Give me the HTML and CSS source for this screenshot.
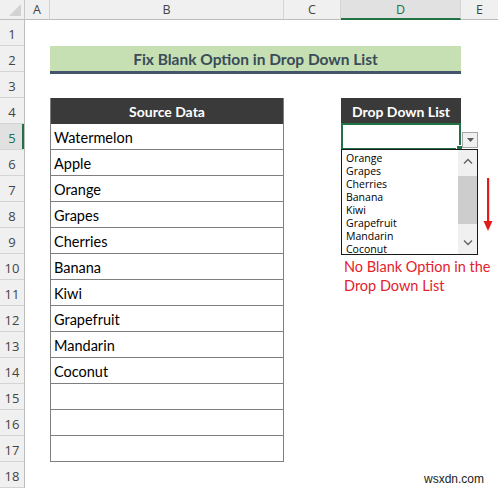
FILE: index.html
```html
<!DOCTYPE html>
<html lang="en">
<head>
<meta charset="utf-8">
<title>Fix Blank Option in Drop Down List</title>
<link rel="stylesheet" href="styles.css">
</head>
<body>
<div class="sheet">
  <div class="corner"><span class="corner-tri"></span></div>
  <div class="colhead ch-a">A</div>
  <div class="colhead ch-b">B</div>
  <div class="colhead ch-c">C</div>
  <div class="colhead ch-d selected">D</div>
  <div class="colhead ch-e">E</div>

  <div class="rowheads">
    <div class="rh">1</div><div class="rh">2</div><div class="rh">3</div>
    <div class="rh">4</div><div class="rh selected">5</div><div class="rh">6</div>
    <div class="rh">7</div><div class="rh">8</div><div class="rh">9</div>
    <div class="rh">10</div><div class="rh">11</div><div class="rh">12</div>
    <div class="rh">13</div><div class="rh">14</div><div class="rh">15</div>
    <div class="rh">16</div><div class="rh">17</div><div class="rh">18</div>
  </div>

  <div class="title">Fix Blank Option in Drop Down List</div>

  <div class="src">
    <div class="src-head">Source Data</div>
    <div class="src-cell">Watermelon</div>
    <div class="src-cell">Apple</div>
    <div class="src-cell">Orange</div>
    <div class="src-cell">Grapes</div>
    <div class="src-cell">Cherries</div>
    <div class="src-cell">Banana</div>
    <div class="src-cell">Kiwi</div>
    <div class="src-cell">Grapefruit</div>
    <div class="src-cell">Mandarin</div>
    <div class="src-cell">Coconut</div>
    <div class="src-cell"></div>
    <div class="src-cell"></div>
    <div class="src-cell"></div>
  </div>

  <div class="dd-head">Drop Down List</div>

  <div class="active">
    <span class="fill-handle"></span>
    <div class="dd-btn">
      <svg width="7" height="4" viewBox="0 0 7 4"><path d="M0 0H7L3.5 4Z" fill="#5a5a5a"/></svg>
    </div>
    <div class="dd-list">
      <ul class="dd-items">
        <li>Orange</li>
        <li>Grapes</li>
        <li>Cherries</li>
        <li>Banana</li>
        <li>Kiwi</li>
        <li>Grapefruit</li>
        <li>Mandarin</li>
        <li>Coconut</li>
      </ul>
      <div class="scrollbar">
        <svg class="chev" width="10" height="6" viewBox="0 0 10 6"><path d="M1 5.5L5 1.5L9 5.5" fill="none" stroke="#606060" stroke-width="1.3"/></svg>
        <div class="track"><div class="thumb"></div></div>
        <svg class="chev" width="10" height="6" viewBox="0 0 10 6"><path d="M1 0.5L5 4.5L9 0.5" fill="none" stroke="#606060" stroke-width="1.3"/></svg>
      </div>
    </div>
    <svg class="arrow" width="12" height="54" viewBox="0 0 12 54">
      <rect x="5" y="0" width="2.2" height="44" fill="#e41b1b"/>
      <path d="M1.5 43H10.5L6 53Z" fill="#e41b1b"/>
    </svg>
  </div>

  <div class="note">No Blank Option in the Drop Down List</div>

  <div class="mark">wsxdn.com</div>
</div>
</body>
</html>
```

FILE: styles.css
```css
html, body {
  margin: 0;
  padding: 0;
  background: #ffffff;
}

.sheet {
  position: relative;
  width: 498px;
  height: 488px;
  overflow: hidden;
  display: grid;
  grid-template-columns: 25px 25px 234px 57px 120px 37px;
  grid-template-rows: 20px repeat(18, 26px);
  font-family: "Lato", "Liberation Sans", sans-serif;
  color: #000;
}

/* header strip */
.corner {
  grid-column: 1;
  grid-row: 1;
  background: #f0f0f0;
  border-right: 1px solid #c8c8c8;
  border-bottom: 1px solid #bdbdbd;
  box-sizing: border-box;
  position: relative;
}
.corner-tri {
  position: absolute;
  right: 3px;
  bottom: 3px;
  width: 12px;
  height: 12px;
  background: #d2d2d2;
  clip-path: polygon(100% 0, 100% 100%, 0 100%);
}

.colhead {
  grid-row: 1;
  background: #f0f0f0;
  border-right: 1px solid #d4d4d4;
  border-bottom: 1px solid #bdbdbd;
  box-sizing: border-box;
  display: flex;
  align-items: center;
  justify-content: center;
  font-family: "Open Sans", "Noto Sans", sans-serif;
  font-size: 12.5px;
  color: #444;
}
.ch-a { grid-column: 2; }
.ch-b { grid-column: 3; }
.ch-c { grid-column: 4; }
.ch-d { grid-column: 5; }
.ch-e { grid-column: 6; border-right: none; }
.colhead.selected {
  background: #e1e1e1;
  border-bottom: 2px solid #217346;
  color: #217346;
}

.rowheads {
  grid-column: 1;
  grid-row: 2 / span 18;
  display: grid;
  grid-template-rows: repeat(18, 26px);
  background: #f0f0f0;
  border-right: 1px solid #bdbdbd;
}
.rh {
  display: flex;
  align-items: center;
  justify-content: center;
  border-bottom: 1px solid #d4d4d4;
  box-sizing: border-box;
  font-family: "Open Sans", "Noto Sans", sans-serif;
  font-size: 13px;
  color: #444;
  padding-top: 2px;
}
.rh.selected {
  background: #e1e1e1;
  color: #217346;
  box-shadow: inset -2px 0 0 #217346;
}

/* title banner in row 2 */
.title {
  grid-column: 3 / 6;
  grid-row: 3;
  height: 28px;
  box-sizing: border-box;
  background: #c6e0b4;
  border-bottom: 3px solid #44546a;
  display: flex;
  align-items: center;
  justify-content: center;
  font-weight: 700;
  font-size: 15.5px;
  color: #3a4b59;
}

/* source data table */
.src {
  grid-column: 3;
  grid-row: 5 / 19;
  display: grid;
  grid-template-rows: repeat(14, 26px);
  border-left: 1px solid #7f7f7f;
  border-right: 1px solid #7f7f7f;
  box-sizing: border-box;
}
.src-head {
  background: #3a3a3a;
  color: #fff;
  font-weight: 700;
  font-size: 14px;
  display: flex;
  align-items: center;
  justify-content: center;
}
.src-cell {
  border-bottom: 1px solid #7f7f7f;
  box-sizing: border-box;
  font-size: 14.5px;
  display: flex;
  align-items: center;
  padding: 2px 0 0 3px;
}

.dd-head {
  grid-column: 5;
  grid-row: 5;
  background: #3a3a3a;
  color: #fff;
  font-weight: 700;
  font-size: 14px;
  display: flex;
  align-items: center;
  justify-content: center;
}

/* selected cell D5 with its validation list */
.active {
  grid-column: 5;
  grid-row: 6;
  position: relative;
  border: 2px solid #217346;
  box-sizing: border-box;
  margin-top: -1px;
}
.fill-handle {
  position: absolute;
  right: -4px;
  bottom: -4px;
  width: 5px;
  height: 5px;
  background: #217346;
  border: 1px solid #fff;
}
.dd-btn {
  position: absolute;
  left: 119px;
  top: 7px;
  width: 16px;
  height: 16px;
  box-sizing: border-box;
  background: #f0f0f0;
  border: 1px solid #a6a6a6;
  display: flex;
  align-items: center;
  justify-content: center;
}
.dd-list {
  position: absolute;
  left: -2px;
  top: 24px;
  width: 137px;
  height: 106px;
  box-sizing: border-box;
  background: #fff;
  border: 1px solid #1a1a1a;
  display: flex;
  z-index: 2;
}
.dd-items {
  list-style: none;
  margin: 0;
  padding: 2px 0 0 4px;
  flex: 1;
  font-family: "Open Sans", "Noto Sans", sans-serif;
  font-size: 10.5px;
  line-height: 13px;
}
.scrollbar {
  width: 19px;
  background: #f0f0f0;
  display: flex;
  flex-direction: column;
  align-items: center;
}
.chev {
  margin: 8px 0;
}
.track {
  flex: 1;
  width: 100%;
  padding: 4px 0 3px;
  box-sizing: border-box;
}
.thumb {
  width: 100%;
  height: 48px;
  background: #cdcdcd;
}
.arrow {
  position: absolute;
  left: 139px;
  top: 53px;
}

/* annotation under the list */
.note {
  grid-column: 5 / 7;
  grid-row: 11 / 13;
  color: #e3222b;
  font-size: 14.5px;
  line-height: 19px;
  padding: 3px 0 0 3px;
  white-space: normal;
}

.mark {
  position: absolute;
  left: 424px;
  top: 472px;
  font-family: "Liberation Sans", Arial, sans-serif;
  font-size: 12px;
  color: #222;
}
```
